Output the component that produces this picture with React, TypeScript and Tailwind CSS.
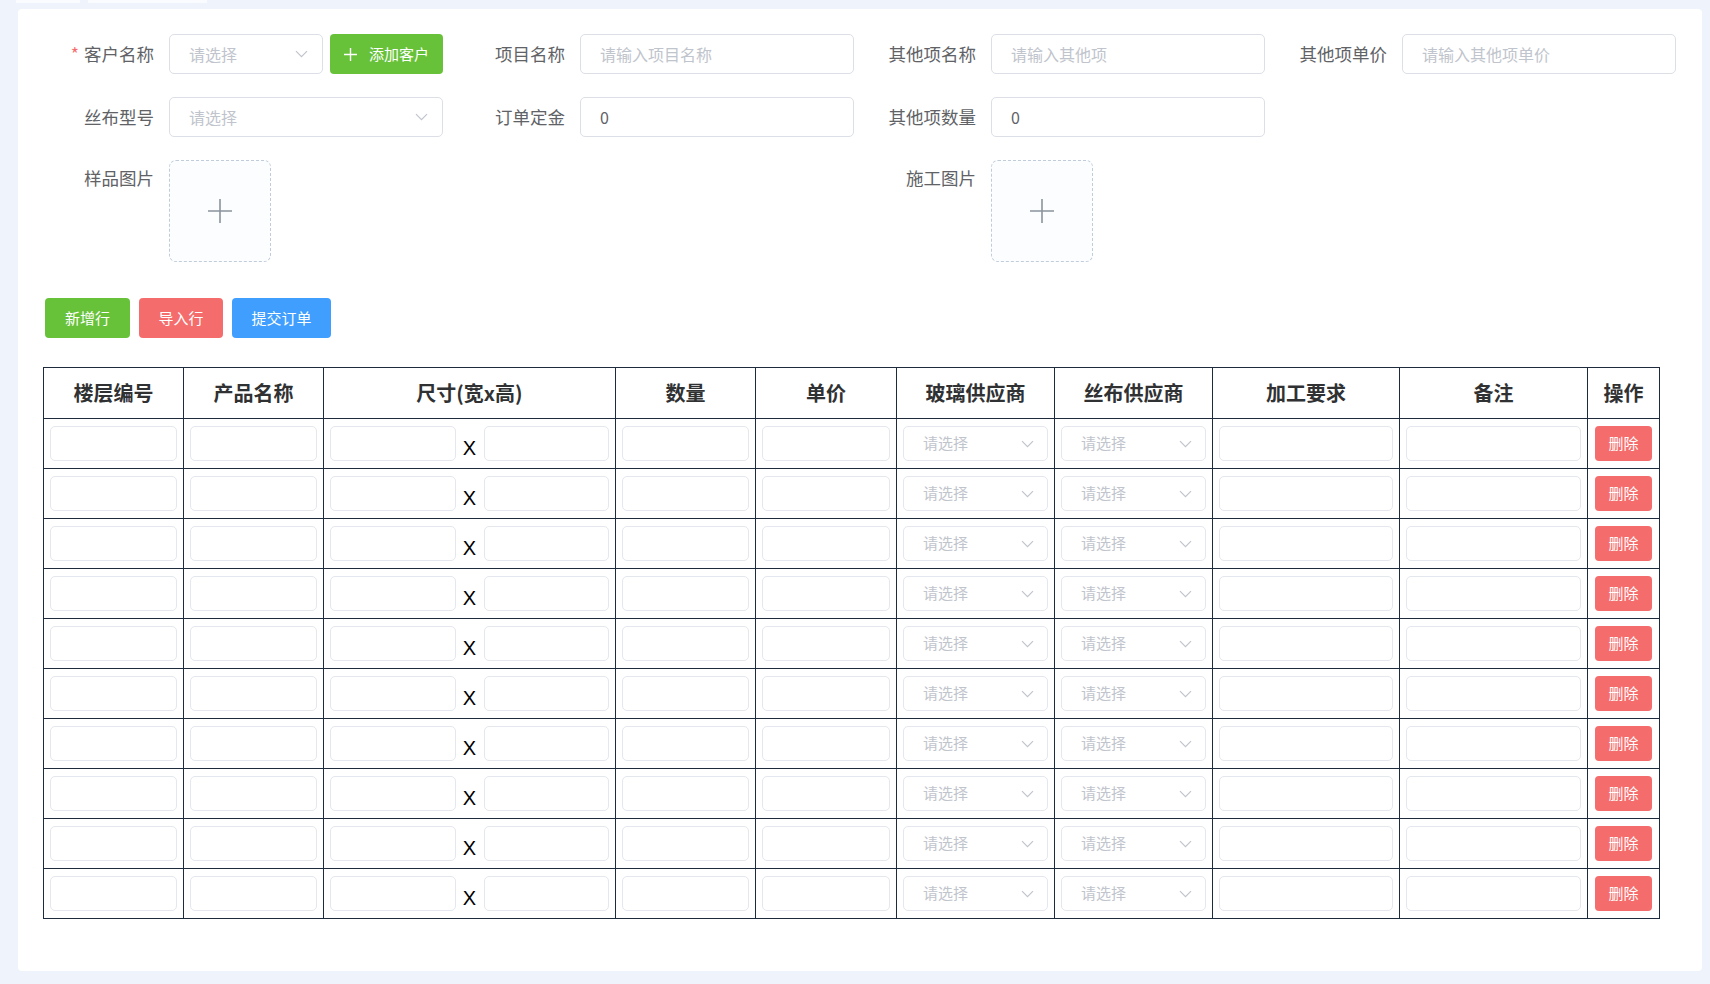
import React from "react";

const font = "font-['Noto_Sans_CJK_SC','Noto_Sans',sans-serif]";
const labelCls =
  "w-[126px] shrink-0 pr-[15px] text-right text-[17.5px] leading-[40px] text-[#606266]";
const inputCls =
  "h-[40px] w-[274px] rounded-[5px] border border-[#dcdfe6] bg-white px-[19px] text-[16px] text-[#606266] outline-none placeholder:text-[#c0c4cc]";
const cellInput =
  "h-[35px] w-full rounded-[5px] border border-[#e4e7ed] bg-white px-[12px] text-[15px] text-[#606266] outline-none";
const th =
  "border border-[#1e2b3c] h-[51px] text-center text-[20px] font-bold text-[#303133]";
const td = "border border-[#1e2b3c] h-[50px] px-[6px]";

const Chevron = () => (
  <svg width="13" height="8" viewBox="0 0 13 8" fill="none">
    <path d="M1 1.2L6.5 6.7L12 1.2" stroke="#c0c4cc" strokeWidth="1.2" />
  </svg>
);

const Select = ({ className }: { className: string }) => (
  <div
    className={`flex items-center justify-between rounded-[5px] border bg-white pl-[19px] text-[#c0c4cc] ${className}`}
  >
    <span>请选择</span>
    <Chevron />
  </div>
);

const Upload = () => (
  <div className="flex h-[102px] w-[102px] items-center justify-center rounded-[7px] border border-dashed border-[#c0ccda] bg-[#fbfdff]">
    <svg width="26" height="26" viewBox="0 0 26 26">
      <path d="M13 1v24M1 13h24" stroke="#8c939d" strokeWidth="1.6" />
    </svg>
  </div>
);

const rows = Array.from({ length: 10 }, (_, i) => i);

export default function App() {
  return (
    <div className={`min-h-screen bg-[#eff3fb] ${font}`}>
      <div className="flex h-[9px] gap-[8px] pl-[16px]">
        <div className="h-[3px] w-[64px] bg-[#fafbfe]" />
        <div className="h-[3px] w-[119px] bg-[#fafbfe]" />
      </div>
      <div className="ml-[18px] mr-[8px] h-[962px] rounded-[4px] bg-white px-[25px] pt-[25px]">
        {/* form */}
        <div className="grid grid-cols-[400px_400px_400px_400px] gap-x-[11px] gap-y-[23px]">
          <div className="flex">
            <label className={labelCls}>
              <span className="mr-[5px] text-[#f56c6c]">*</span>客户名称
            </label>
            <Select className="h-[40px] w-[154px] border-[#dcdfe6] pr-[14px] text-[16px]" />
            <button className="ml-[7px] flex h-[40px] w-[113px] items-center justify-center gap-[12px] rounded-[4px] bg-[#67c23a] text-[15px] text-white">
              <svg width="13" height="13" viewBox="0 0 13 13">
                <path d="M6.5 0v13M0 6.5h13" stroke="#fff" strokeWidth="1.4" />
              </svg>
              添加客户
            </button>
          </div>
          <div className="flex">
            <label className={labelCls}>项目名称</label>
            <input className={inputCls} placeholder="请输入项目名称" />
          </div>
          <div className="flex">
            <label className={labelCls}>其他项名称</label>
            <input className={inputCls} placeholder="请输入其他项" />
          </div>
          <div className="flex">
            <label className={labelCls}>其他项单价</label>
            <input className={inputCls} placeholder="请输入其他项单价" />
          </div>

          <div className="flex">
            <label className={labelCls}>丝布型号</label>
            <Select className="h-[40px] w-[274px] border-[#dcdfe6] pr-[14px] text-[16px]" />
          </div>
          <div className="flex">
            <label className={labelCls}>订单定金</label>
            <input className={inputCls} defaultValue="0" />
          </div>
          <div className="flex">
            <label className={labelCls}>其他项数量</label>
            <input className={inputCls} defaultValue="0" />
          </div>
          <div />

          <div className="flex">
            <label className={`${labelCls} -mt-[2px]`}>样品图片</label>
            <Upload />
          </div>
          <div />
          <div className="flex">
            <label className={`${labelCls} -mt-[2px]`}>施工图片</label>
            <Upload />
          </div>
          <div />
        </div>

        {/* actions */}
        <div className="mt-[36px] flex gap-[9px] pl-[2px] text-[15px] text-white">
          <button className="h-[40px] w-[85px] rounded-[4px] bg-[#67c23a]">新增行</button>
          <button className="h-[40px] w-[84px] rounded-[4px] bg-[#f56c6c]">导入行</button>
          <button className="h-[40px] w-[99px] rounded-[4px] bg-[#409eff]">提交订单</button>
        </div>

        {/* table */}
        <table className="mt-[29px] w-[1616px] table-fixed border-collapse">
          <colgroup>
            <col className="w-[140px]" />
            <col className="w-[140px]" />
            <col className="w-[292px]" />
            <col className="w-[140px]" />
            <col className="w-[141px]" />
            <col className="w-[158px]" />
            <col className="w-[158px]" />
            <col className="w-[187px]" />
            <col className="w-[188px]" />
            <col className="w-[72px]" />
          </colgroup>
          <thead>
            <tr>
              <th className={th}>楼层编号</th>
              <th className={th}>产品名称</th>
              <th className={th}>尺寸(宽x高)</th>
              <th className={th}>数量</th>
              <th className={th}>单价</th>
              <th className={th}>玻璃供应商</th>
              <th className={th}>丝布供应商</th>
              <th className={th}>加工要求</th>
              <th className={th}>备注</th>
              <th className={th}>操作</th>
            </tr>
          </thead>
          <tbody>
            {rows.map((r) => (
              <tr key={r}>
                <td className={td}>
                  <input className={cellInput} />
                </td>
                <td className={td}>
                  <input className={cellInput} />
                </td>
                <td className={td}>
                  <div className="flex items-center">
                    <input className={`${cellInput} flex-1`} />
                    <span className="w-[28px] shrink-0 pt-[8px] text-center font-['Liberation_Sans',sans-serif] text-[20px] text-black">
                      X
                    </span>
                    <input className={`${cellInput} flex-1`} />
                  </div>
                </td>
                <td className={td}>
                  <input className={cellInput} />
                </td>
                <td className={td}>
                  <input className={cellInput} />
                </td>
                <td className={td}>
                  <Select className="h-[35px] w-full border-[#e4e7ed] pl-[17px] pr-[13px] text-[15px]" />
                </td>
                <td className={td}>
                  <Select className="h-[35px] w-full border-[#e4e7ed] pl-[17px] pr-[13px] text-[15px]" />
                </td>
                <td className={td}>
                  <input className={cellInput} />
                </td>
                <td className={td}>
                  <input className={cellInput} />
                </td>
                <td className={`${td} text-center`}>
                  <button className="h-[35px] w-[57px] rounded-[4px] bg-[#f56c6c] text-[15px] text-white">
                    删除
                  </button>
                </td>
              </tr>
            ))}
          </tbody>
        </table>
      </div>
    </div>
  );
}
